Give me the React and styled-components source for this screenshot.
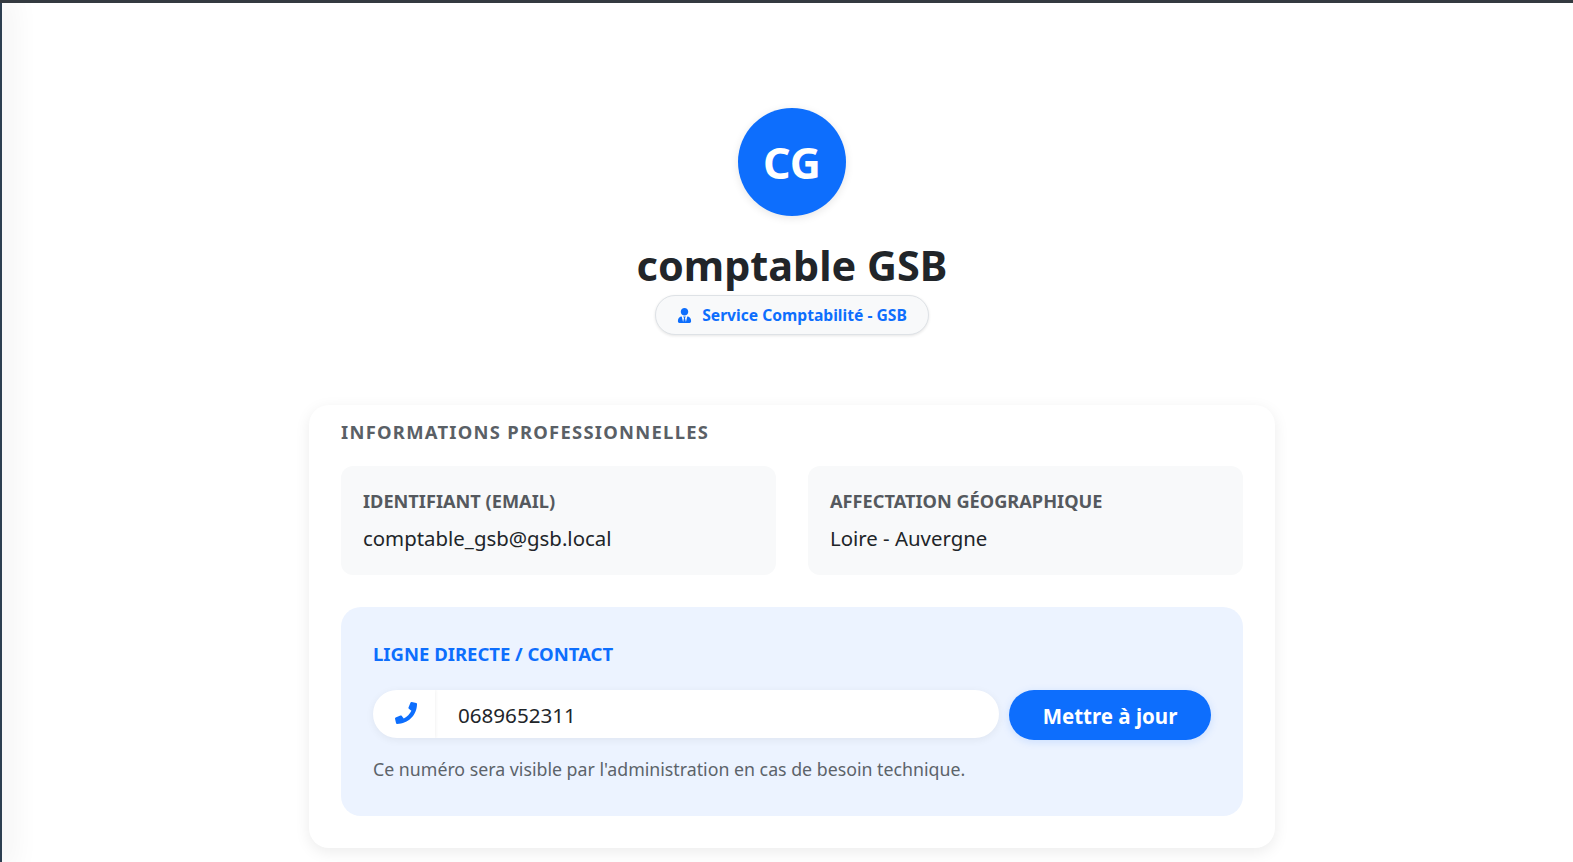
import React from 'react'
import styled, { createGlobalStyle } from 'styled-components'
import { FaPhone, FaUserTie } from 'react-icons/fa'

const GlobalStyle = createGlobalStyle`
  html, body { margin: 0; height: 100%; background: #fff; overflow: hidden; }
  body { font-family: "Noto Sans", "Open Sans", sans-serif; color: #212529; }
  * { box-sizing: border-box; }
`

const TopBar = styled.div`
  height: 3px;
  background: #343a40;
`

const Shell = styled.div`
  display: flex;
  height: 859px;
  overflow: hidden;
`

const SideEdge = styled.div`
  width: 2px;
  flex: none;
  background: #2c3e50;
  box-shadow: 0 0 30px 8px rgba(0, 0, 0, 0.07);
`

const Main = styled.main`
  flex: 1;
  display: flex;
  flex-direction: column;
  align-items: center;
  padding: 105px 0 0 9px;
`

const Avatar = styled.div`
  width: 108px;
  height: 108px;
  border-radius: 50%;
  background: #0d6efd;
  color: #fff;
  display: flex;
  align-items: center;
  justify-content: center;
  font-size: 43px;
  font-weight: 700;
  box-shadow: 0 2px 8px rgba(0, 0, 0, 0.1);
`

const Name = styled.h1`
  margin: 21px 0 0;
  font-size: 41.4px;
  line-height: 56px;
  font-weight: 700;
  color: #212529;
`

const Badge = styled.div`
  margin-top: 2px;
  width: 274px;
  height: 40px;
  border-radius: 20px;
  background: #f8f9fa;
  border: 1px solid #dee2e6;
  box-shadow: 0 1px 3px rgba(0, 0, 0, 0.1);
  display: flex;
  align-items: center;
  justify-content: center;
  gap: 10px;
  color: #0d6efd;
  font-size: 15.65px;
  font-weight: 700;
  svg { font-size: 15px; }
`

const Card = styled.section`
  margin-top: 70px;
  width: 966px;
  height: 443px;
  flex: none;
  padding: 14px 32px 32px;
  background: #fff;
  border-radius: 20px;
  box-shadow: 0 4px 15px rgba(0, 0, 0, 0.08);
`

const SectionTitle = styled.h2`
  margin: 0;
  font-size: 18.4px;
  line-height: 25px;
  font-weight: 700;
  letter-spacing: 1.27px;
  color: #5a6066;
`

const InfoGrid = styled.div`
  margin-top: 22px;
  display: grid;
  grid-template-columns: 1fr 1fr;
  gap: 32px;
`

const InfoBox = styled.div`
  height: 109px;
  padding: 23px 22px 0;
  background: #f8f9fa;
  border-radius: 12px;
`

const InfoLabel = styled.div`
  font-size: 18.2px;
  line-height: 25px;
  font-weight: 700;
  color: #55595e;
`

const InfoValue = styled.div`
  margin-top: 10px;
  font-size: 20.4px;
  line-height: 28px;
  color: #212529;
`

const ContactPanel = styled.div`
  margin-top: 32px;
  height: 209px;
  padding: 34px 32px 0;
  background: #ecf3ff;
  border-radius: 20px;
`

const ContactTitle = styled.div`
  font-size: 18.5px;
  line-height: 25px;
  font-weight: 700;
  color: #0d6efd;
`

const ContactRow = styled.div`
  margin-top: 24px;
  display: flex;
  align-items: flex-start;
  gap: 10px;
`

const PhoneGroup = styled.div`
  flex: 1;
  height: 48px;
  display: flex;
  background: #fff;
  border-radius: 24px;
  box-shadow: 0 2px 8px rgba(0, 0, 0, 0.06);
  overflow: hidden;
`

const PhoneIcon = styled.div`
  width: 62px;
  flex: none;
  display: flex;
  align-items: center;
  justify-content: center;
  color: #0d6efd;
  font-size: 22px;
  box-shadow: 1px 0 3px rgba(0, 0, 0, 0.05);
  svg { transform: translate(2px, -1px); }
`

const PhoneInput = styled.input`
  flex: 1;
  min-width: 0;
  border: 0;
  outline: 0;
  background: transparent;
  padding: 2px 23px 0;
  font: 400 20.6px "Noto Sans", "Open Sans", sans-serif;
  color: #212529;
`

const SaveButton = styled.button`
  width: 202px;
  height: 50px;
  flex: none;
  border: 0;
  border-radius: 25px;
  padding: 2px 0 0;
  background: #0d6efd;
  color: #fff;
  font: 700 20.5px "Noto Sans", "Open Sans", sans-serif;
  box-shadow: 0 2px 8px rgba(13, 110, 253, 0.15);
`

const Hint = styled.p`
  margin: 17px 0 0;
  font-size: 17.75px;
  line-height: 25px;
  color: #5c636a;
`

export default function App() {
  return (
    <>
      <GlobalStyle />
      <TopBar />
      <Shell>
        <SideEdge />
        <Main>
          <Avatar>CG</Avatar>
          <Name>comptable GSB</Name>
          <Badge>
            <FaUserTie />
            Service Comptabilité - GSB
          </Badge>
          <Card>
            <SectionTitle>INFORMATIONS PROFESSIONNELLES</SectionTitle>
            <InfoGrid>
              <InfoBox>
                <InfoLabel>IDENTIFIANT (EMAIL)</InfoLabel>
                <InfoValue>comptable_gsb@gsb.local</InfoValue>
              </InfoBox>
              <InfoBox>
                <InfoLabel>AFFECTATION GÉOGRAPHIQUE</InfoLabel>
                <InfoValue>Loire - Auvergne</InfoValue>
              </InfoBox>
            </InfoGrid>
            <ContactPanel>
              <ContactTitle>LIGNE DIRECTE / CONTACT</ContactTitle>
              <ContactRow>
                <PhoneGroup>
                  <PhoneIcon><FaPhone /></PhoneIcon>
                  <PhoneInput defaultValue="0689652311" />
                </PhoneGroup>
                <SaveButton>Mettre à jour</SaveButton>
              </ContactRow>
              <Hint>Ce numéro sera visible par l'administration en cas de besoin technique.</Hint>
            </ContactPanel>
          </Card>
        </Main>
      </Shell>
    </>
  )
}
